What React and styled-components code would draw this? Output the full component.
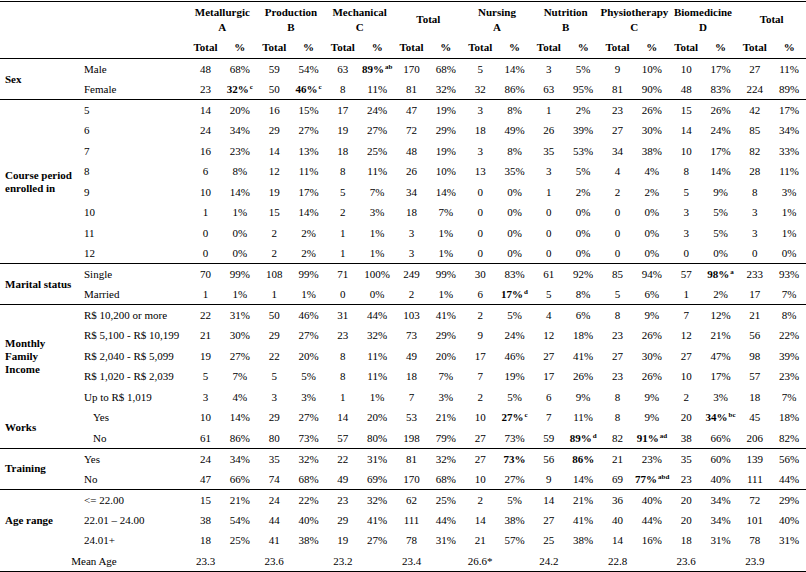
import React from "react";
import styled, { createGlobalStyle } from "styled-components";

const GlobalStyle = createGlobalStyle`
  html, body {
    margin: 0;
    padding: 0;
    background: #fff;
  }
  body {
    font-family: "Liberation Serif", "Times New Roman", serif;
    color: #000;
  }
`;

const groups = [
  ["Metallurgic", "A"],
  ["Production", "B"],
  ["Mechanical", "C"],
  ["Total"],
  ["Nursing", "A"],
  ["Nutrition", "B"],
  ["Physiotherapy", "C"],
  ["Biomedicine", "D"],
  ["Total"],
];

// "!" = bold value, "^" = superscript letters
const blocks = [
  [
    {
      label: ["Sex"],
      rows: [
        ["Male", "48 68% 59 54% 63 !89%^ab 170 68% 5 14% 3 5% 9 10% 10 17% 27 11%"],
        ["Female", "23 !32%^c 50 !46%^c 8 11% 81 32% 32 86% 63 95% 81 90% 48 83% 224 89%"],
      ],
    },
  ],
  [
    {
      label: ["Course period", "enrolled in"],
      rows: [
        ["5", "14 20% 16 15% 17 24% 47 19% 3 8% 1 2% 23 26% 15 26% 42 17%"],
        ["6", "24 34% 29 27% 19 27% 72 29% 18 49% 26 39% 27 30% 14 24% 85 34%"],
        ["7", "16 23% 14 13% 18 25% 48 19% 3 8% 35 53% 34 38% 10 17% 82 33%"],
        ["8", "6 8% 12 11% 8 11% 26 10% 13 35% 3 5% 4 4% 8 14% 28 11%"],
        ["9", "10 14% 19 17% 5 7% 34 14% 0 0% 1 2% 2 2% 5 9% 8 3%"],
        ["10", "1 1% 15 14% 2 3% 18 7% 0 0% 0 0% 0 0% 3 5% 3 1%"],
        ["11", "0 0% 2 2% 1 1% 3 1% 0 0% 0 0% 0 0% 3 5% 3 1%"],
        ["12", "0 0% 2 2% 1 1% 3 1% 0 0% 0 0% 0 0% 0 0% 0 0%"],
      ],
    },
  ],
  [
    {
      label: ["Marital status"],
      rows: [
        ["Single", "70 99% 108 99% 71 100% 249 99% 30 83% 61 92% 85 94% 57 !98%^a 233 93%"],
        ["Married", "1 1% 1 1% 0 0% 2 1% 6 !17%^d 5 8% 5 6% 1 2% 17 7%"],
      ],
    },
  ],
  [
    {
      label: ["Monthly", "Family", "Income"],
      rows: [
        ["R$ 10,200 or more", "22 31% 50 46% 31 44% 103 41% 2 5% 4 6% 8 9% 7 12% 21 8%"],
        ["R$ 5,100 - R$ 10,199", "21 30% 29 27% 23 32% 73 29% 9 24% 12 18% 23 26% 12 21% 56 22%"],
        ["R$ 2,040 - R$ 5,099", "19 27% 22 20% 8 11% 49 20% 17 46% 27 41% 27 30% 27 47% 98 39%"],
        ["R$ 1,020 - R$ 2,039", "5 7% 5 5% 8 11% 18 7% 7 19% 17 26% 23 26% 10 17% 57 23%"],
        ["Up to R$ 1,019", "3 4% 3 3% 1 1% 7 3% 2 5% 6 9% 8 9% 2 3% 18 7%"],
      ],
    },
    {
      label: ["Works"],
      indent: true,
      rows: [
        ["Yes", "10 14% 29 27% 14 20% 53 21% 10 !27%^c 7 11% 8 9% 20 !34%^bc 45 18%"],
        ["No", "61 86% 80 73% 57 80% 198 79% 27 73% 59 !89%^d 82 !91%^ad 38 66% 206 82%"],
      ],
    },
  ],
  [
    {
      label: ["Training"],
      rows: [
        ["Yes", "24 34% 35 32% 22 31% 81 32% 27 !73% 56 !86% 21 23% 35 60% 139 56%"],
        ["No", "47 66% 74 68% 49 69% 170 68% 10 27% 9 14% 69 !77%^abd 23 40% 111 44%"],
      ],
    },
  ],
  [
    {
      label: ["Age range"],
      rows: [
        ["<= 22.00", "15 21% 24 22% 23 32% 62 25% 2 5% 14 21% 36 40% 20 34% 72 29%"],
        ["22.01 \u2013 24.00", "38 54% 44 40% 29 41% 111 44% 14 38% 27 41% 40 44% 20 34% 101 40%"],
        ["24.01+", "18 25% 41 38% 19 27% 78 31% 21 57% 25 38% 14 16% 18 31% 78 31%"],
      ],
    },
  ],
];

const meanAges = ["23.3", "23.6", "23.2", "23.4", "26.6*", "24.2", "22.8", "23.6", "23.9"];

const Page = styled.div`
  width: 806px;
  padding-top: 1px;
`;

const Table = styled.table`
  width: 806px;
  table-layout: fixed;
  border-collapse: collapse;
  font-size: 11px;
  border-top: 1px solid #000;
  border-bottom: 1px solid #000;
`;

const Col = styled.col`
  width: ${(p) => p.$w}px;
`;

const Head = styled.thead`
  border-bottom: 1px solid #000;
`;

const Block = styled.tbody`
  border-top: 1px solid #000;
`;

const Row = styled.tr`
  height: ${(p) => p.$h || 20.5}px;
`;

const HeadCell = styled.th`
  padding: 0;
  font-weight: bold;
  text-align: center;
  vertical-align: middle;
  line-height: 15px;
  white-space: nowrap;
`;

const Category = styled.th`
  padding: 0 0 0 5px;
  font-weight: bold;
  text-align: left;
  vertical-align: middle;
  line-height: 13px;
`;

const SubLabel = styled.td`
  padding: 0 0 0 ${(p) => (p.$indent ? 13 : 4)}px;
  text-align: left;
  vertical-align: middle;
  white-space: nowrap;
`;

const MeanLabel = styled.td`
  padding: 0;
  text-align: center;
  vertical-align: middle;
`;

const Num = styled.td`
  padding: 0;
  text-align: center;
  vertical-align: middle;
  white-space: nowrap;
  font-weight: ${(p) => (p.$bold ? "bold" : "normal")};
`;

const Sup = styled.span`
  position: relative;
  top: -4px;
  margin-left: 1px;
  font-size: 7px;
  font-weight: bold;
`;

const Value = ({ v }) => {
  const bold = v.startsWith("!");
  const [text, sup] = v.replace("!", "").split("^");
  return (
    <Num $bold={bold}>
      {text}
      {sup && <Sup>{sup}</Sup>}
    </Num>
  );
};

const Lines = ({ lines }) =>
  lines.map((l, i) => (
    <React.Fragment key={i}>
      {i > 0 && <br />}
      {l}
    </React.Fragment>
  ));

export default function App() {
  return (
    <Page>
      <GlobalStyle />
      <Table>
        <colgroup>
          <Col $w={80} />
          <Col $w={108} />
          {groups.map((g, i) => (
            <React.Fragment key={i}>
              <Col $w={35} />
              <Col $w={33.67} />
            </React.Fragment>
          ))}
        </colgroup>
        <Head>
          <Row $h={36}>
            <HeadCell rowSpan={2} />
            <HeadCell rowSpan={2} />
            {groups.map((g, i) => (
              <HeadCell key={i} colSpan={2}>
                <Lines lines={g} />
              </HeadCell>
            ))}
          </Row>
          <Row $h={21}>
            {groups.map((g, i) => (
              <React.Fragment key={i}>
                <HeadCell>Total</HeadCell>
                <HeadCell>%</HeadCell>
              </React.Fragment>
            ))}
          </Row>
        </Head>
        {blocks.map((cats, bi) => (
          <Block key={bi}>
            {cats.map((cat) =>
              cat.rows.map(([name, vals], ri) => (
                <Row key={cat.label[0] + ri}>
                  {ri === 0 && (
                    <Category rowSpan={cat.rows.length}>
                      <Lines lines={cat.label} />
                    </Category>
                  )}
                  <SubLabel $indent={cat.indent}>{name}</SubLabel>
                  {vals.split(" ").map((v, vi) => (
                    <Value key={vi} v={v} />
                  ))}
                </Row>
              ))
            )}
            {bi === blocks.length - 1 && (
              <Row>
                <MeanLabel colSpan={2}>Mean Age</MeanLabel>
                {meanAges.map((m, mi) => (
                  <React.Fragment key={mi}>
                    <Num>{m}</Num>
                    <Num />
                  </React.Fragment>
                ))}
              </Row>
            )}
          </Block>
        ))}
      </Table>
    </Page>
  );
}
